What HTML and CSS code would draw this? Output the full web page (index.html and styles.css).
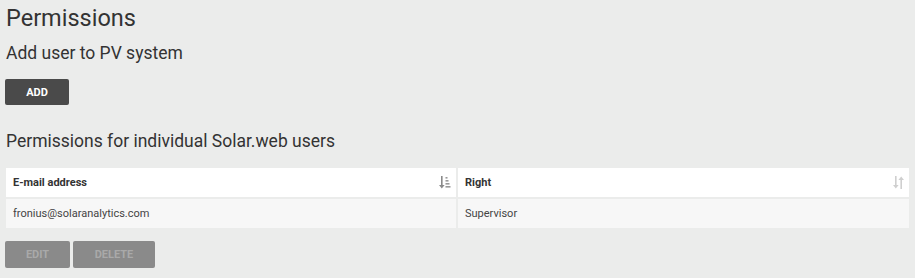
FILE: index.html
```html
<!DOCTYPE html>
<html>
<head>
<meta charset="utf-8">
<link rel="stylesheet" href="styles.css">
</head>
<body>
<div class="page">
  <h1 class="title">Permissions</h1>
  <h2 class="subtitle">Add user to PV system</h2>
  <button class="btn btn-dark">ADD</button>
  <h2 class="subtitle section">Permissions for individual Solar.web users</h2>
  <div class="table">
    <div class="th">
      <span>E-mail address</span>
      <svg class="sort-icon" width="12" height="13" viewBox="0 0 12 13">
        <rect x="2" y="0" width="1.6" height="10" fill="#8a8a8a"/>
        <path d="M0 9 L5.6 9 L2.8 12.5 Z" fill="#8a8a8a"/>
        <rect x="6.5" y="1" width="2" height="1.6" fill="#9a9a9a"/>
        <rect x="6.5" y="4" width="3" height="1.6" fill="#9a9a9a"/>
        <rect x="6.5" y="7" width="4" height="1.6" fill="#9a9a9a"/>
        <rect x="6.5" y="10" width="5" height="1.6" fill="#9a9a9a"/>
      </svg>
    </div>
    <div class="th">
      <span>Right</span>
      <svg class="sort-icon" width="11" height="13" viewBox="0 0 11 13">
        <rect x="2" y="0" width="1.6" height="10" fill="#cfcfcf"/>
        <path d="M0 9 L5.6 9 L2.8 12.5 Z" fill="#cfcfcf"/>
        <rect x="7.4" y="3" width="1.6" height="10" fill="#cfcfcf"/>
        <path d="M5.4 4 L11 4 L8.2 0.5 Z" fill="#cfcfcf"/>
      </svg>
    </div>
    <div class="td">fronius@solaranalytics.com</div>
    <div class="td">Supervisor</div>
  </div>
  <div class="actions">
    <button class="btn btn-disabled btn-edit">EDIT</button>
    <button class="btn btn-disabled btn-delete">DELETE</button>
  </div>
</div>
</body>
</html>
```

FILE: styles.css
```css
* { box-sizing: border-box; }
html, body {
  margin: 0;
  padding: 0;
  background: #ebeceb;
}
body {
  font-family: Roboto, "Liberation Sans", Arial, sans-serif;
  color: #333;
}
.page {
  padding: 5px 6px 0 5px;
  display: flex;
  flex-direction: column;
  align-items: flex-start;
}
.title {
  margin: 0 0 0 1px;
  font-size: 23.5px;
  line-height: 26px;
  font-weight: 400;
  color: #333;
}
.subtitle {
  margin: 11px 0 0 1px;
  font-size: 17.5px;
  line-height: 22px;
  font-weight: 400;
  color: #333;
}
.subtitle.section {
  margin-top: 25px;
}
.btn {
  border: none;
  border-radius: 2px;
  font-family: Roboto, "Liberation Sans", Arial, sans-serif;
  font-size: 11px;
  font-weight: 700;
  padding: 0;
  cursor: pointer;
}
.btn-dark {
  margin-top: 15px;
  width: 64px;
  height: 26px;
  background: #4a4a4a;
  color: #fff;
}
.table {
  margin-top: 16px;
  margin-left: 1px;
  width: 903px;
  display: grid;
  grid-template-columns: 450px 1fr;
  column-gap: 2px;
  row-gap: 2px;
}
.th {
  height: 29px;
  background: #fff;
  display: flex;
  align-items: center;
  justify-content: space-between;
  padding: 0 5px 0 7px;
  font-size: 11px;
  font-weight: 700;
  color: #333;
}
.sort-icon {
  display: block;
}
.td {
  height: 29px;
  background: #f7f7f7;
  display: flex;
  align-items: center;
  padding: 0 7px;
  font-size: 11px;
  color: #444;
}
.actions {
  margin-top: 13px;
  display: flex;
  gap: 3px;
}
.btn-disabled {
  height: 27px;
  background: #8a8a8a;
  color: #a9a9a9;
}
.btn-edit { width: 65px; }
.btn-delete { width: 82px; }
```
